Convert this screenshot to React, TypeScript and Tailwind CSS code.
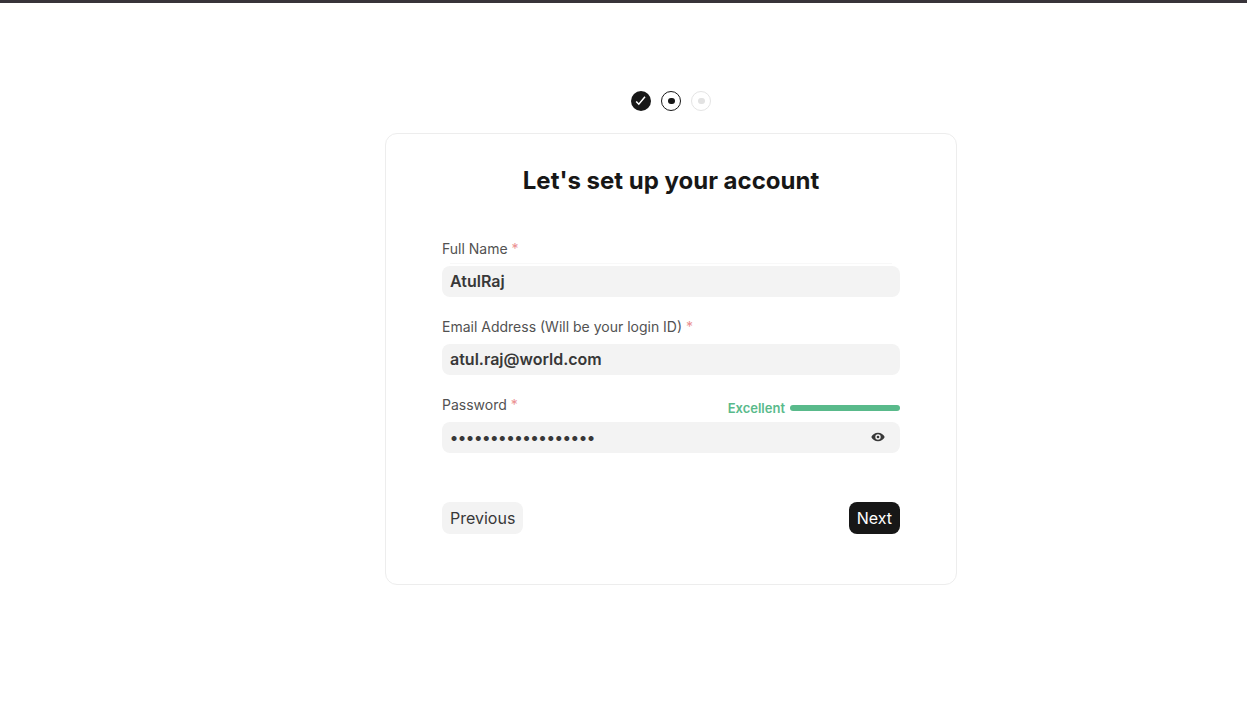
import React from 'react';

// =====================================================================
// Step indicator
// =====================================================================
const StepIndicator: React.FC = () => (
    <ol className="flex justify-center gap-2.5" aria-label="Setup progress">
        {/* Completed */}
        <li className="flex size-5 items-center justify-center rounded-full bg-[#171717]">
            <svg width="12" height="12" viewBox="0 0 12 12" fill="none" aria-hidden="true">
                <path d="M1.2 6.4 3.8 9.2 10 1.8" stroke="#fff" strokeWidth="1.5" />
            </svg>
        </li>
        {/* Current */}
        <li className="flex size-5 items-center justify-center rounded-full border border-[#171717]" aria-current="step">
            <span className="h-1.5 w-[7px] rounded-full bg-[#171717]" />
        </li>
        {/* Upcoming */}
        <li className="flex size-5 items-center justify-center rounded-full border border-[#e4e4e4]">
            <span className="h-1.5 w-[7px] rounded-full bg-[#e2e2e2]" />
        </li>
    </ol>
);

// =====================================================================
// Form field
// =====================================================================
interface FieldProps {
    id: string;
    label: string;
    type: string;
    value: string;
    divider?: boolean;
    extra?: React.ReactNode;
    action?: React.ReactNode;
}

const Field: React.FC<FieldProps> = ({ id, label, type, value, divider, extra, action }) => (
    <div>
        <div className="flex h-6 items-start justify-between">
            <label htmlFor={id} className="text-[14px] leading-5 text-[#525252]">
                {label} <span className="text-[#eb9091]">*</span>
            </label>
            {extra}
        </div>
        <div className={divider ? 'mx-2 mb-0.5 h-px bg-[#f8f8f8]' : 'mb-0.5 h-px'} />
        <div className="flex h-[31px] items-center rounded-lg bg-[#f3f3f3] pr-3.5 pb-px pl-2">
            <input
                id={id}
                type={type}
                defaultValue={value}
                required
                className="min-w-0 flex-1 bg-transparent text-[16px] leading-6 font-semibold text-[#383838] outline-none"
            />
            {action}
        </div>
    </div>
);

const PasswordStrength: React.FC = () => (
    <div className="flex items-center gap-[5px] pt-[3px]">
        <span className="text-[13px] leading-5 font-semibold text-[#59ba8b]">Excellent</span>
        <span className="h-1.5 w-[110px] rounded-full bg-[#59ba8b]" />
    </div>
);

const ShowPasswordButton: React.FC = () => (
    <button type="button" aria-label="Show password" className="flex size-4 items-center justify-center">
        <svg width="16" height="16" viewBox="0 0 16 16" aria-hidden="true">
            <path
                fill="#383838"
                fillRule="evenodd"
                d="M8 3.7C4.9 3.7 2.5 5.4 1.3 8c1.2 2.6 3.6 4.3 6.7 4.3s5.5-1.7 6.7-4.3C13.5 5.4 11.1 3.7 8 3.7Zm0 1.6a2.7 2.7 0 1 1 0 5.4 2.7 2.7 0 0 1 0-5.4Z"
            />
            <circle cx="8" cy="8" r="1.3" fill="#383838" />
        </svg>
    </button>
);

export default function App() {
    return (
        <div className="min-h-screen border-t-3 border-[#38343a] bg-white font-['Inter',sans-serif]">
            <main className="pt-[88px] pb-16 pl-[95px]">
                <div className="mx-auto max-w-[572px]">
                    <StepIndicator />

                    <form className="mt-[22px] rounded-xl border border-[#ededed] px-14 pt-7 pb-[50px]">
                        <h1 className="text-center text-[24px] leading-[38px] font-bold text-[#171717]">
                            Let's set up your account
                        </h1>

                        <div className="mt-[39px] space-y-5">
                            <Field id="full-name" label="Full Name" type="text" value="AtulRaj" divider />
                            <Field
                                id="email"
                                label="Email Address (Will be your login ID)"
                                type="email"
                                value="atul.raj@world.com"
                            />
                            <Field
                                id="password"
                                label="Password"
                                type="password"
                                value="correct-horse-2024"
                                extra={<PasswordStrength />}
                                action={<ShowPasswordButton />}
                            />
                        </div>

                        {/* Navigation */}
                        <div className="mt-[49px] flex items-center justify-between">
                            <button type="button" className="h-8 rounded-lg bg-[#f3f3f3] px-2 text-[16px] leading-6 text-[#383838]">
                                Previous
                            </button>
                            <button type="submit" className="h-8 rounded-lg bg-[#171717] px-2 text-[16px] leading-6 text-white">
                                Next
                            </button>
                        </div>
                    </form>
                </div>
            </main>
        </div>
    );
}
